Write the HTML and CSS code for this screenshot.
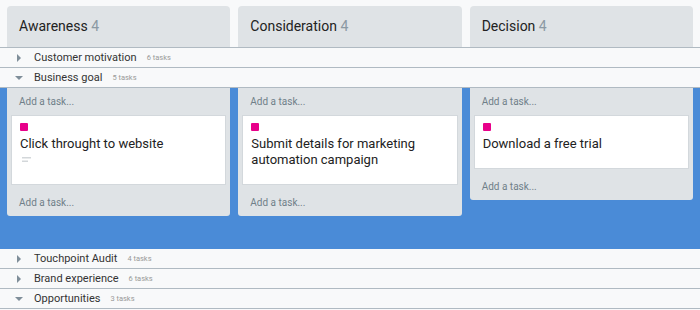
FILE: index.html
```html
<!DOCTYPE html>
<html lang="en">
  <head>
    <meta charset="UTF-8" />
    <meta name="viewport" content="width=device-width, initial-scale=1.0" />
    <title>Board</title>
    <link rel="stylesheet" href="styles.css">
  </head>
  <body>
    <div class="board">
      <div class="heads">
        <div class="head">Awareness <span class="count">4</span></div>
        <div class="head">Consideration <span class="count">4</span></div>
        <div class="head">Decision <span class="count">4</span></div>
      </div>

      <div class="lane">
        <span class="arrow right"></span>
        <span class="lane-name">Customer motivation</span>
        <span class="lane-count">6 tasks</span>
      </div>

      <div class="lane">
        <span class="arrow down"></span>
        <span class="lane-name">Business goal</span>
        <span class="lane-count">5 tasks</span>
      </div>
      <div class="lane-body">
        <div class="col">
          <div class="add top">Add a task...</div>
          <div class="card">
            <div class="tag"></div>
            <div class="title">Click throught to website</div>
            <div class="meta">
              <svg width="9" height="6" viewBox="0 0 9 6">
                <rect x="0" y="0" width="9" height="1.5" fill="#d3d7da" />
                <rect x="0" y="3.5" width="6" height="1.5" fill="#d3d7da" />
              </svg>
            </div>
          </div>
          <div class="add">Add a task...</div>
        </div>
        <div class="col">
          <div class="add top">Add a task...</div>
          <div class="card">
            <div class="tag"></div>
            <div class="title">Submit details for marketing automation campaign</div>
          </div>
          <div class="add">Add a task...</div>
        </div>
        <div class="col">
          <div class="add top">Add a task...</div>
          <div class="card">
            <div class="tag"></div>
            <div class="title">Download a free trial</div>
          </div>
          <div class="add">Add a task...</div>
        </div>
      </div>

      <div class="lane">
        <span class="arrow right"></span>
        <span class="lane-name">Touchpoint Audit</span>
        <span class="lane-count">4 tasks</span>
      </div>
      <div class="lane">
        <span class="arrow right"></span>
        <span class="lane-name">Brand experience</span>
        <span class="lane-count">6 tasks</span>
      </div>
      <div class="lane">
        <span class="arrow down"></span>
        <span class="lane-name">Opportunities</span>
        <span class="lane-count">3 tasks</span>
      </div>
    </div>
  </body>
</html>
```

FILE: styles.css
```css
body {
  margin: 0;
  background-color: #f8f9fa;
  font-family: Roboto, "Liberation Sans", sans-serif;
  color: #222;
}
.board {
  width: 700px;
  height: 310px;
  overflow: hidden;
}
.heads {
  display: flex;
  gap: 8px;
  padding: 6px 7px 0;
  border-bottom: 1px solid #b0bac2;
}
.head {
  width: 224px;
  height: 41px;
  line-height: 41px;
  box-sizing: border-box;
  padding-left: 12px;
  background-color: #dfe3e6;
  border-radius: 4px 4px 0 0;
  font-size: 14px;
  color: #222;
}
.count {
  color: #8b99a3;
}
.lane {
  height: 20px;
  box-sizing: border-box;
  border-bottom: 1px solid #b0bac2;
  display: flex;
  align-items: center;
  padding-left: 15px;
}
.arrow {
  width: 8px;
  height: 8px;
  display: flex;
  align-items: center;
  justify-content: center;
  margin-right: 11px;
}
.arrow.right::before {
  content: "";
  border-left: 4px solid #7f8e99;
  border-top: 4px solid transparent;
  border-bottom: 4px solid transparent;
}
.arrow.down::before {
  content: "";
  border-top: 4px solid #7f8e99;
  border-left: 4px solid transparent;
  border-right: 4px solid transparent;
}
.lane-name {
  font-size: 11px;
  color: #333;
}
.lane-count {
  font-size: 7.5px;
  color: #999;
  margin-left: 10px;
}
.lane-body {
  height: 161px;
  box-sizing: border-box;
  background-color: #4a8bd7;
  display: flex;
  align-items: flex-start;
  gap: 8px;
  padding: 0 7px;
}
.col {
  width: 224px;
  background-color: #dfe3e6;
  border-radius: 0 0 3px 3px;
}
.add {
  font-size: 10px;
  line-height: 14px;
  color: #707f89;
  padding: 11px 12px 6px;
}
.add.top {
  padding-top: 7px;
}
.card {
  margin: 0 4px;
  background-color: #fff;
  border: 1px solid #d3d8dc;
  padding: 7px 8px 16px;
}
.tag {
  width: 8px;
  height: 8px;
  border-radius: 1px;
  background-color: #e8008a;
  margin-bottom: 5px;
}
.title {
  font-size: 13px;
  line-height: 16px;
  color: #222;
}
.meta {
  height: 16px;
  display: flex;
  align-items: center;
  padding-left: 2px;
}
.meta svg {
  display: block;
}
```
